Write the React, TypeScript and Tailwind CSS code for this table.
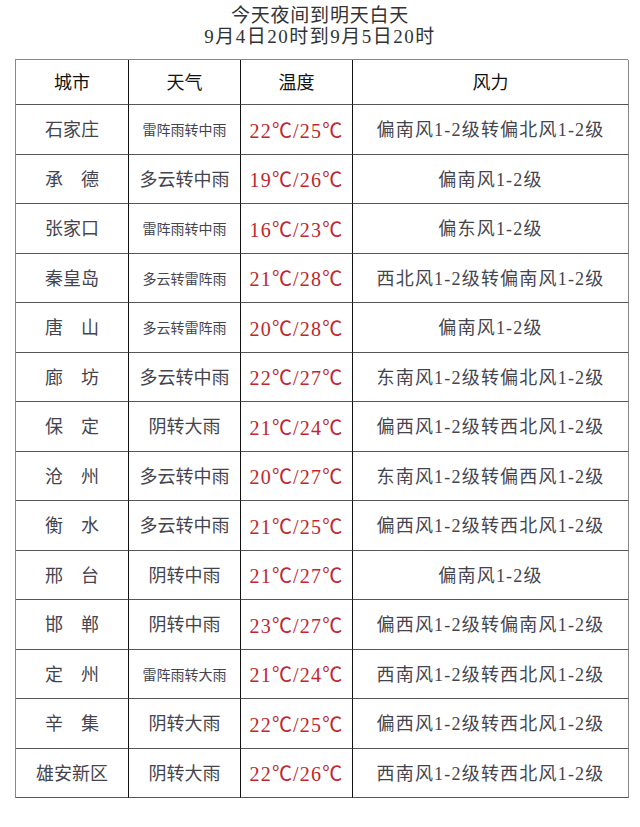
const rows = [
  { city: "石家庄", weather: "雷阵雨转中雨", small: true, temp: "22℃/25℃", wind: "偏南风1-2级转偏北风1-2级" },
  { city: "承　德", weather: "多云转中雨", small: false, temp: "19℃/26℃", wind: "偏南风1-2级" },
  { city: "张家口", weather: "雷阵雨转中雨", small: true, temp: "16℃/23℃", wind: "偏东风1-2级" },
  { city: "秦皇岛", weather: "多云转雷阵雨", small: true, temp: "21℃/28℃", wind: "西北风1-2级转偏南风1-2级" },
  { city: "唐　山", weather: "多云转雷阵雨", small: true, temp: "20℃/28℃", wind: "偏南风1-2级" },
  { city: "廊　坊", weather: "多云转中雨", small: false, temp: "22℃/27℃", wind: "东南风1-2级转偏北风1-2级" },
  { city: "保　定", weather: "阴转大雨", small: false, temp: "21℃/24℃", wind: "偏西风1-2级转西北风1-2级" },
  { city: "沧　州", weather: "多云转中雨", small: false, temp: "20℃/27℃", wind: "东南风1-2级转偏西风1-2级" },
  { city: "衡　水", weather: "多云转中雨", small: false, temp: "21℃/25℃", wind: "偏西风1-2级转西北风1-2级" },
  { city: "邢　台", weather: "阴转中雨", small: false, temp: "21℃/27℃", wind: "偏南风1-2级" },
  { city: "邯　郸", weather: "阴转中雨", small: false, temp: "23℃/27℃", wind: "偏西风1-2级转偏南风1-2级" },
  { city: "定　州", weather: "雷阵雨转大雨", small: true, temp: "21℃/24℃", wind: "西南风1-2级转西北风1-2级" },
  { city: "辛　集", weather: "阴转大雨", small: false, temp: "22℃/25℃", wind: "偏西风1-2级转西北风1-2级" },
  { city: "雄安新区", weather: "阴转大雨", small: false, temp: "22℃/26℃", wind: "西南风1-2级转西北风1-2级" },
];

const font = { fontFamily: '"Liberation Serif", "Noto Sans CJK SC", serif' };

export default function App() {
  return (
    <div className="w-[640px] h-[827px] bg-white overflow-hidden" style={font}>
      {/* Title */}
      <div className="pt-[5px] text-center text-[19px] leading-[21px] text-[#333]">
        <p className="tracking-[0.8px]">今天夜间到明天白天</p>
        <p className="tracking-[1.5px]">9月4日20时到9月5日20时</p>
      </div>

      {/* Table */}
      <div className="ml-[15px] mt-[12px] w-[613px] border-l border-t border-[#888] grid grid-cols-[113px_112px_112px_276px]">
        {["城市", "天气", "温度", "风力"].map((h, i) => (
          <div
            key={h}
            className={`h-[45px] flex items-center justify-center pt-[2px] text-[18px] text-[#111] border-b border-b-[#555] border-r ${
              i === 3 ? "border-r-[#888]" : "border-r-[#111]"
            }`}
          >
            {h}
          </div>
        ))}
        {rows.map((r, idx) => (
          <div key={idx} className="contents">
            <div className="h-[49.5px] flex items-center justify-center pt-[3px] text-[18px] text-[#44444f] border-b border-b-[#555] border-r border-r-[#111]">
              {r.city}
            </div>
            <div
              className={`h-[49.5px] flex items-center justify-center pt-[3px] text-[#44444f] border-b border-b-[#555] border-r border-r-[#111] ${
                r.small ? "text-[14px]" : "text-[18px]"
              }`}
            >
              {r.weather}
            </div>
            <div className="h-[49.5px] flex items-center justify-center pt-[3px] text-[20px] tracking-[1.2px] text-[#c0262c] border-b border-b-[#555] border-r border-r-[#111]">
              {r.temp}
            </div>
            <div className="h-[49.5px] flex items-center justify-center pt-[3px] text-[18px] tracking-[1.2px] text-[#44444f] border-b border-b-[#555] border-r border-r-[#888]">
              {r.wind}
            </div>
          </div>
        ))}
      </div>
    </div>
  );
}
